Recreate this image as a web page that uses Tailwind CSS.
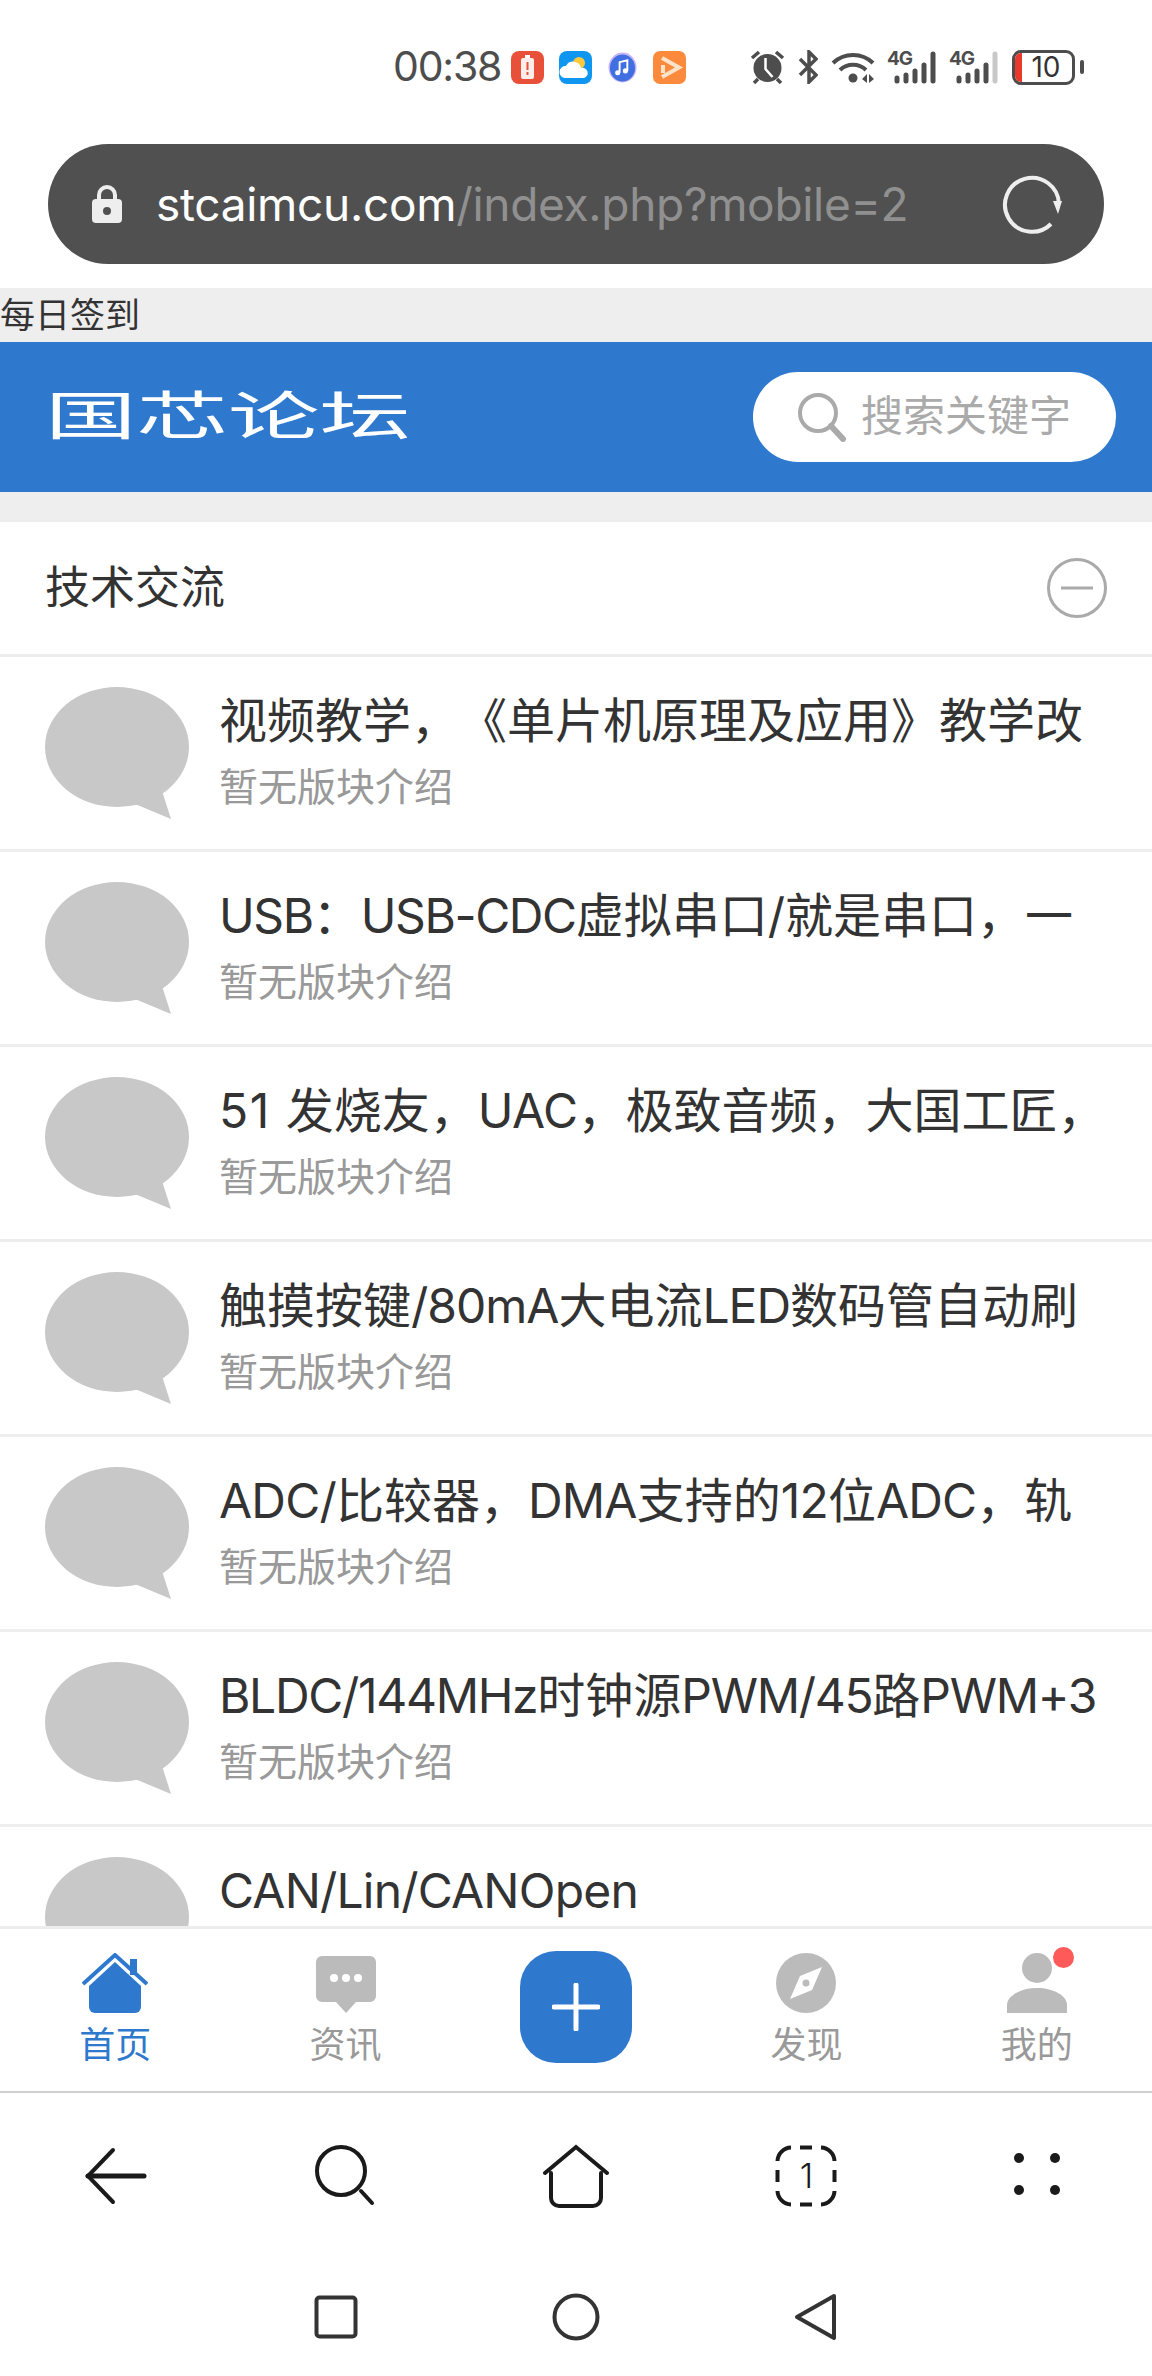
<!DOCTYPE html>
<html lang="zh-CN">
  <head>
    <meta charset="UTF-8" />
    <title>国芯论坛</title>
    <script src="https://cdn.jsdelivr.net/npm/@tailwindcss/browser@4"></script>
  </head>
  <body class="bg-white font-['Inter','Noto_Sans_CJK_SC',sans-serif] [text-spacing-trim:space-all]">
    <div class="w-[1152px] h-[2376px] overflow-hidden flex flex-col">
      <!-- status bar -->
      <div class="h-[134px] flex items-center pl-[393px] text-[#4d4d4d] shrink-0">
        <span class="text-[41px] w-[118px] tracking-[-1.2px]">00:38</span>
        <svg class="w-[33px] h-[33px]" viewBox="0 0 33 33"><rect width="33" height="33" rx="8" fill="#e8503a"/><rect x="10" y="7" width="13" height="21" rx="2" fill="#fff" fill-opacity=".9"/><rect x="14" y="4" width="5" height="3" fill="#fff"/><rect x="15.5" y="11" width="2" height="8" fill="#e8503a"/><rect x="15.5" y="21" width="2" height="3" fill="#e8503a"/></svg>
        <svg class="w-[33px] h-[33px] ml-[15px]" viewBox="0 0 33 33"><rect width="33" height="33" rx="8" fill="#0f96f0"/><circle cx="20" cy="12" r="6" fill="#ffc93c"/><path d="M6 27a6 6 0 0 1 1-12 8 8 0 0 1 15 2 5 5 0 0 1 3 10z" fill="#fff"/></svg>
        <svg class="w-[29px] h-[33px] ml-[16px]" viewBox="0 0 30 33"><ellipse cx="15" cy="16.5" rx="14.5" ry="15.5" fill="#c8b4f5"/><ellipse cx="15" cy="17" rx="13" ry="14" fill="#3f6fe0"/><path d="M12 22V11l8-2v11" fill="none" stroke="#fff" stroke-width="2"/><circle cx="10" cy="22" r="2.6" fill="#fff"/><circle cx="18" cy="20" r="2.6" fill="#fff"/></svg>
        <svg class="w-[33px] h-[33px] ml-[16px]" viewBox="0 0 33 33"><rect width="33" height="33" rx="7" fill="#fb8a3c"/><path d="M9 7l17 9.5L9 26" fill="none" stroke="#ffe3c8" stroke-width="4"/><path d="M10 14v8" stroke="#ffe3c8" stroke-width="4"/></svg>
        <svg class="w-[35px] h-[34px] ml-[64px]" viewBox="0 0 35 34"><circle cx="17.5" cy="18" r="14" fill="#4d4d4d"/><path d="M15.5 8v11l7 8" fill="none" stroke="#fff" stroke-width="2.5"/><path d="M2 8l7-6M33 8l-7-6M4 33l4-4M31 33l-4-4" stroke="#4d4d4d" stroke-width="3.5"/></svg>
        <svg class="w-[20px] h-[34px] ml-[13px]" viewBox="0 0 20 34"><path d="M2 9l16 16-7 7V2l7 7L2 25" fill="none" stroke="#4d4d4d" stroke-width="3.5"/></svg>
        <svg class="w-[44px] h-[32px] ml-[13px]" viewBox="0 0 44 32"><path d="M2 12a29 29 0 0 1 40 0M9 19a19 19 0 0 1 26 0" fill="none" stroke="#4d4d4d" stroke-width="4"/><circle cx="22" cy="27" r="4.5" fill="#4d4d4d"/><path d="M36 23l-5 5 5 4zM38 23l5 5-5 4z" fill="#4d4d4d"/></svg>
        <div class="relative w-[51px] h-[34px] ml-[12px]">
          <span class="absolute left-0 top-[-1px] text-[19px] font-bold leading-[20px] tracking-[-1px]">4G</span>
          <svg class="w-[51px] h-[34px]" viewBox="0 0 51 34"><path d="M10 28v3M19 25v6M28 21v10M37 15v16M46 4v27" stroke="#4d4d4d" stroke-width="5" stroke-linecap="round"/></svg>
        </div>
        <div class="relative w-[51px] h-[34px] ml-[11px]">
          <span class="absolute left-0 top-[-1px] text-[19px] font-bold leading-[20px] tracking-[-1px]">4G</span>
          <svg class="w-[51px] h-[34px]" viewBox="0 0 51 34"><path d="M10 28v3M19 25v6M28 21v10M37 15v16" stroke="#4d4d4d" stroke-width="5" stroke-linecap="round"/><path d="M46 4v27" stroke="#c8c8c8" stroke-width="5" stroke-linecap="round"/></svg>
        </div>
        <div class="ml-[12px] w-[63px] h-[35px] border-[3px] border-[#4d4d4d] rounded-[9px] flex items-center justify-center overflow-hidden relative">
          <span class="absolute left-0 top-0 bottom-0 w-[7px] bg-[#e8392c]"></span>
          <span class="text-[28px] leading-none text-[#333] pl-[5px]">10</span>
        </div>
        <span class="ml-[5px] w-[4px] h-[14px] rounded-full bg-[#4d4d4d]"></span>
      </div>

      <!-- address bar -->
      <div class="mx-[48px] mt-[10px] h-[120px] rounded-full bg-[#505050] flex items-center pl-[44px] shrink-0">
        <svg class="w-[30px] h-[40px]" viewBox="0 0 30 40"><path d="M7 18v-7a8 8 0 0 1 16 0v7" fill="none" stroke="#eee" stroke-width="4"/><rect y="15" x="0" width="30" height="24" rx="4" fill="#eee"/><circle cx="15" cy="27" r="4" fill="#505050"/></svg>
        <span class="ml-[34px] text-[46px] text-white w-[846px] whitespace-nowrap tracking-[-0.3px]">stcaimcu.com<span class="text-[#909090]">/index.php?mobile=2</span></span>
        <svg class="w-[60px] h-[60px]" viewBox="0 0 60 60"><path d="M49 50A27 27 0 1 1 57 30" fill="none" stroke="#eee" stroke-width="4"/><path d="M51 27h9l-4 13z" fill="#eee"/></svg>
      </div>

      <!-- sign-in strip -->
      <div class="mt-[24px] h-[54px] bg-[#eeeeee] text-[35px] leading-[54px] text-[#333] shrink-0">每日签到</div>

      <!-- forum header -->
      <div class="h-[150px] bg-[#2e79ce] flex items-center justify-between pl-[45px] pr-[36px] shrink-0">
        <span class="text-[52px] leading-none text-white origin-left scale-x-[1.76] whitespace-nowrap">国芯论坛</span>
        <div class="w-[363px] h-[90px] rounded-full bg-white flex items-center pl-[44px]">
          <svg class="w-[50px] h-[50px]" viewBox="0 0 50 50"><circle cx="21" cy="21" r="18" fill="none" stroke="#aaa" stroke-width="4"/><path d="M34 34l12 13" stroke="#aaa" stroke-width="6" stroke-linecap="round"/></svg>
          <span class="ml-[14px] mt-[-4px] text-[42px] text-[#aaa] whitespace-nowrap">搜索关键字</span>
        </div>
      </div>
      <div class="h-[30px] bg-[#eeeeee] shrink-0"></div>

      <!-- forum list -->
      <div class="h-[1404px] overflow-hidden shrink-0">
        <div class="h-[135px] border-b-[3px] border-[#eeeeee] flex items-center justify-between pl-[45px] pr-[45px]">
          <span class="text-[45px] text-[#333]">技术交流</span>
          <svg class="w-[60px] h-[60px]" viewBox="0 0 60 60"><circle cx="30" cy="30" r="28.5" fill="none" stroke="#aaa" stroke-width="3"/><path d="M14 30h32" stroke="#aaa" stroke-width="3"/></svg>
        </div>

        <div class="h-[195px] border-b-[3px] border-[#eeeeee] flex pl-[45px]">
          <svg class="w-[144px] h-[134px] mt-[30px]" viewBox="0 0 144 134"><ellipse cx="72" cy="60" rx="72" ry="60" fill="#c8c8c8"/><path d="M117 104l9 28-36-15z" fill="#c8c8c8"/></svg>
          <div class="ml-[30px] pt-[31px] leading-[66px]">
            <div class="text-[48px] text-[#333] whitespace-nowrap">视频教学，《单片机原理及应用》教学改</div>
            <div class="text-[39px] text-[#999] whitespace-nowrap">暂无版块介绍</div>
          </div>
        </div>
        <div class="h-[195px] border-b-[3px] border-[#eeeeee] flex pl-[45px]">
          <svg class="w-[144px] h-[134px] mt-[30px]" viewBox="0 0 144 134"><ellipse cx="72" cy="60" rx="72" ry="60" fill="#c8c8c8"/><path d="M117 104l9 28-36-15z" fill="#c8c8c8"/></svg>
          <div class="ml-[30px] pt-[31px] leading-[66px]">
            <div class="text-[48px] text-[#333] whitespace-nowrap"><span class="tracking-[-1.4px]">USB</span>：<span class="tracking-[-1.4px]">USB-CDC</span>虚拟串口/就是串口，一</div>
            <div class="text-[39px] text-[#999] whitespace-nowrap">暂无版块介绍</div>
          </div>
        </div>
        <div class="h-[195px] border-b-[3px] border-[#eeeeee] flex pl-[45px]">
          <svg class="w-[144px] h-[134px] mt-[30px]" viewBox="0 0 144 134"><ellipse cx="72" cy="60" rx="72" ry="60" fill="#c8c8c8"/><path d="M117 104l9 28-36-15z" fill="#c8c8c8"/></svg>
          <div class="ml-[30px] pt-[31px] leading-[66px]">
            <div class="text-[48px] text-[#333] whitespace-nowrap"><span class="tracking-[1.5px]">51 </span>发烧友，<span class="tracking-[-0.5px]">UAC</span>，极致音频，大国工匠，</div>
            <div class="text-[39px] text-[#999] whitespace-nowrap">暂无版块介绍</div>
          </div>
        </div>
        <div class="h-[195px] border-b-[3px] border-[#eeeeee] flex pl-[45px]">
          <svg class="w-[144px] h-[134px] mt-[30px]" viewBox="0 0 144 134"><ellipse cx="72" cy="60" rx="72" ry="60" fill="#c8c8c8"/><path d="M117 104l9 28-36-15z" fill="#c8c8c8"/></svg>
          <div class="ml-[30px] pt-[31px] leading-[66px]">
            <div class="text-[48px] text-[#333] whitespace-nowrap">触摸按键<span class="tracking-[-1px]">/80mA</span>大电流<span class="tracking-[-1px]">LED</span>数码管自动刷</div>
            <div class="text-[39px] text-[#999] whitespace-nowrap">暂无版块介绍</div>
          </div>
        </div>
        <div class="h-[195px] border-b-[3px] border-[#eeeeee] flex pl-[45px]">
          <svg class="w-[144px] h-[134px] mt-[30px]" viewBox="0 0 144 134"><ellipse cx="72" cy="60" rx="72" ry="60" fill="#c8c8c8"/><path d="M117 104l9 28-36-15z" fill="#c8c8c8"/></svg>
          <div class="ml-[30px] pt-[31px] leading-[66px]">
            <div class="text-[48px] text-[#333] whitespace-nowrap"><span class="tracking-[-0.8px]">ADC/</span>比较器，<span class="tracking-[-0.8px]">DMA</span>支持的<span class="tracking-[-0.8px]">12</span>位<span class="tracking-[-0.8px]">ADC</span>，轨</div>
            <div class="text-[39px] text-[#999] whitespace-nowrap">暂无版块介绍</div>
          </div>
        </div>
        <div class="h-[195px] border-b-[3px] border-[#eeeeee] flex pl-[45px]">
          <svg class="w-[144px] h-[134px] mt-[30px]" viewBox="0 0 144 134"><ellipse cx="72" cy="60" rx="72" ry="60" fill="#c8c8c8"/><path d="M117 104l9 28-36-15z" fill="#c8c8c8"/></svg>
          <div class="ml-[30px] pt-[31px] leading-[66px]">
            <div class="text-[48px] text-[#333] whitespace-nowrap"><span class="tracking-[-1.3px]">BLDC/144MHz</span>时钟源<span class="tracking-[-1.3px]">PWM/45</span>路<span class="tracking-[-1.3px]">PWM+3</span></div>
            <div class="text-[39px] text-[#999] whitespace-nowrap">暂无版块介绍</div>
          </div>
        </div>
        <div class="h-[195px] flex pl-[45px]">
          <svg class="w-[144px] h-[134px] mt-[30px]" viewBox="0 0 144 134"><ellipse cx="72" cy="60" rx="72" ry="60" fill="#c8c8c8"/><path d="M117 104l9 28-36-15z" fill="#c8c8c8"/></svg>
          <div class="ml-[30px] pt-[31px] leading-[66px]">
            <div class="text-[48px] text-[#333] whitespace-nowrap tracking-[-0.8px]">CAN/Lin/CANOpen</div>
          </div>
        </div>
      </div>

      <!-- forum tab bar -->
      <div class="h-[167px] border-t-[3px] border-b-[2px] border-t-[#eeeeee] border-b-[#d0d0d0] grid grid-cols-5 shrink-0 text-[36px] leading-[44px] text-[#999]">
        <div class="flex flex-col items-center pt-[24px]">
          <svg class="w-[66px] h-[60px]" viewBox="0 0 66 60"><path d="M1 31L33 2l32 29" fill="none" stroke="#2e79ce" stroke-width="4"/><rect x="48" y="6" width="7" height="16" fill="#2e79ce"/><path d="M33 9L7 33v21a6 6 0 0 0 6 6h40a6 6 0 0 0 6-6V33z" fill="#2e79ce"/></svg>
          <span class="mt-[10px] text-[#2e79ce]">首页</span>
        </div>
        <div class="flex flex-col items-center pt-[24px]">
          <svg class="w-[60px] h-[60px]" viewBox="0 0 60 60"><path d="M6 3h48a6 6 0 0 1 6 6v34a6 6 0 0 1-6 6H40l-10 11-10-11H6a6 6 0 0 1-6-6V9a6 6 0 0 1 6-6z" fill="#bbb"/><circle cx="18" cy="25" r="4" fill="#fff"/><circle cx="30" cy="25" r="4" fill="#fff"/><circle cx="42" cy="25" r="4" fill="#fff"/></svg>
          <span class="mt-[10px]">资讯</span>
        </div>
        <div class="flex justify-center pt-[22px]">
          <div class="w-[112px] h-[112px] rounded-[36px] bg-[#2e79ce] flex items-center justify-center">
            <svg class="w-[48px] h-[48px]" viewBox="0 0 48 48"><path d="M24 2v44M2 24h44" stroke="#fff" stroke-width="5" stroke-linecap="round"/></svg>
          </div>
        </div>
        <div class="flex flex-col items-center pt-[24px]">
          <svg class="w-[60px] h-[60px]" viewBox="0 0 60 60"><circle cx="30" cy="30" r="30" fill="#bbb"/><path d="M46 14L36 37 14 46l10-23z" fill="#fff"/><circle cx="30" cy="30" r="3.5" fill="#bbb"/></svg>
          <span class="mt-[10px]">发现</span>
        </div>
        <div class="flex flex-col items-center pt-[24px] relative">
          <svg class="w-[60px] h-[60px]" viewBox="0 0 60 60"><circle cx="30" cy="15" r="15" fill="#bbb"/><path d="M0 60v-8c0-9 13-17 30-17s30 8 30 17v8z" fill="#bbb"/></svg>
          <span class="mt-[10px]">我的</span>
          <span class="absolute left-[131px] top-[18px] w-[21px] h-[21px] rounded-full bg-[#ff5a5a]"></span>
        </div>
      </div>

      <!-- browser toolbar -->
      <div class="h-[166px] grid grid-cols-5 items-center shrink-0">
        <div class="flex justify-center">
          <svg class="w-[64px] h-[64px]" viewBox="0 0 64 64"><path d="M30 6L5 32l25 26" fill="none" stroke="#1a1a1a" stroke-width="4" stroke-linecap="round"/><path d="M5 32h56" stroke="#1a1a1a" stroke-width="5" stroke-linecap="round"/></svg>
        </div>
        <div class="flex justify-center">
          <svg class="w-[64px] h-[64px]" viewBox="0 0 64 64"><circle cx="27" cy="27" r="24" fill="none" stroke="#1a1a1a" stroke-width="4"/><path d="M47 47l11 12" stroke="#1a1a1a" stroke-width="4" stroke-linecap="round"/></svg>
        </div>
        <div class="flex justify-center">
          <svg class="w-[66px] h-[64px]" viewBox="0 0 66 64"><path d="M2 29L33 3l31 26M8 29v25a8 8 0 0 0 8 8h34a8 8 0 0 0 8-8V29" fill="none" stroke="#1a1a1a" stroke-width="4" stroke-linecap="round"/></svg>
        </div>
        <div class="flex justify-center">
          <div class="relative w-[62px] h-[62px] flex items-center justify-center">
            <svg class="absolute inset-0 w-[62px] h-[62px]" viewBox="0 0 62 62"><path d="M25 2.500h12M59.500 25v12M37 59.500H25M2.500 37V25M2.500 16A14 14 0 0 1 16 2.500M46 2.500A14 14 0 0 1 59.500 16M59.500 46A14 14 0 0 1 46 59.500M16 59.500A14 14 0 0 1 2.500 46" fill="none" stroke="#1a1a1a" stroke-width="4"/></svg>
            <span class="text-[34px] leading-none font-light text-[#1a1a1a]">1</span>
          </div>
        </div>
        <div class="flex justify-center">
          <svg class="w-[46px] h-[42px] mt-[-4px]" viewBox="0 0 46 42"><circle cx="5" cy="5" r="5" fill="#1a1a1a"/><circle cx="41" cy="5" r="5" fill="#1a1a1a"/><circle cx="5" cy="37" r="5" fill="#1a1a1a"/><circle cx="41" cy="37" r="5" fill="#1a1a1a"/></svg>
        </div>
      </div>

      <!-- system nav -->
      <div class="flex justify-center">
        <div class="w-[240px] h-[116px] flex items-center justify-center">
          <svg class="w-[44px] h-[44px]" viewBox="0 0 44 44"><rect x="2.500" y="2.500" width="39" height="39" rx="3" fill="none" stroke="#333" stroke-width="4"/></svg>
        </div>
        <div class="w-[240px] h-[116px] flex items-center justify-center">
          <svg class="w-[48px] h-[48px]" viewBox="0 0 48 48"><circle cx="24" cy="24" r="21.500" fill="none" stroke="#333" stroke-width="4"/></svg>
        </div>
        <div class="w-[240px] h-[116px] flex items-center justify-center">
          <svg class="w-[44px] h-[48px]" viewBox="0 0 44 48"><path d="M40 3L3 24l37 21z" fill="none" stroke="#333" stroke-width="4" stroke-linejoin="round"/></svg>
        </div>
      </div>
    </div>
  </body>
</html>
